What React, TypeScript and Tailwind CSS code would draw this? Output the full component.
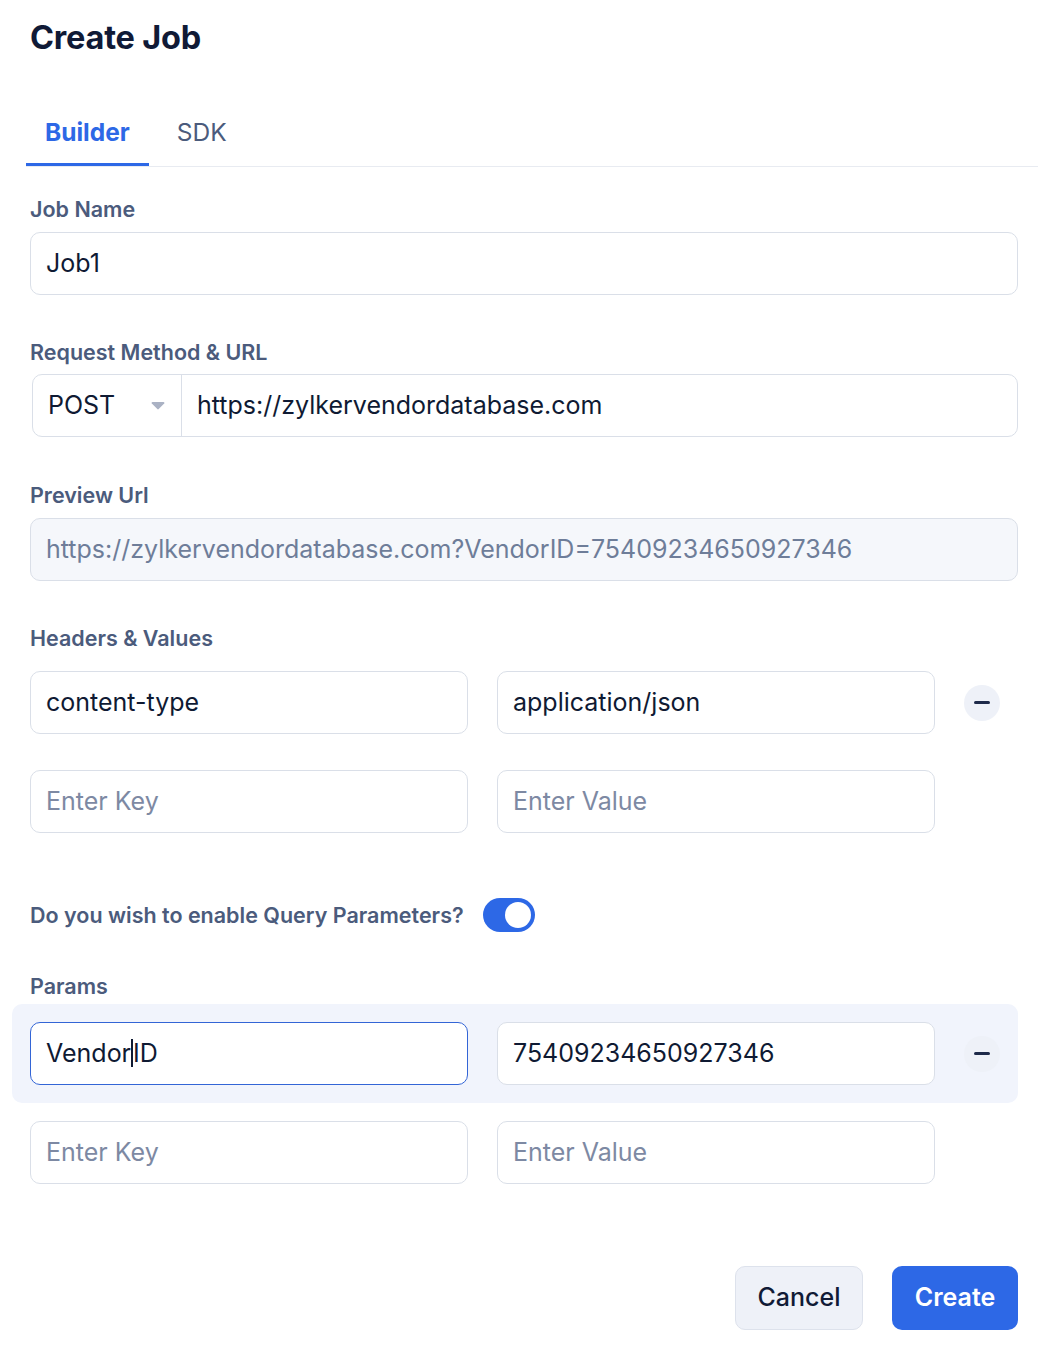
import { useState } from "react";

// Create Job form — builder tab
type Pair = { key: string; value: string };

const font = { fontFamily: "Inter, 'Noto Sans', sans-serif" };

function MinusButton() {
    return (
        <button className="flex h-9 w-9 shrink-0 items-center justify-center rounded-full bg-[#eef1f8]">
            <span className="block h-[3px] w-[16px] rounded-full bg-[#1e2a4a]" />
        </button>
    );
}

function Field({ value, placeholder, focused }: { value?: string; placeholder: string; focused?: boolean }) {
    return (
        <div
            className={
                "flex h-[63px] w-[438px] shrink-0 items-center rounded-[10px] border bg-white px-[15px] text-[25px] " +
                (focused ? "border-[#3365d6]" : "border-[#dadfe8]")
            }
        >
            {value ? (
                focused ? (
                    <span className="text-[#0f1a33]">
                        Vendor<span className="inline-block h-[28px] w-[2px] translate-y-[5px] bg-[#0f1a33] align-baseline" />ID
                    </span>
                ) : (
                    <span className="text-[#0f1a33]">{value}</span>
                )
            ) : (
                <span className="text-[#7d89a3]">{placeholder}</span>
            )}
        </div>
    );
}

function Label({ children }: { children: React.ReactNode }) {
    return <p className="text-[21.5px] font-semibold leading-6 text-[#4b5b7c]">{children}</p>;
}

export default function App() {
    const [enabled, setEnabled] = useState(true);
    const headers: Pair[] = [{ key: "content-type", value: "application/json" }];

    return (
        <div className="min-h-[1350px] bg-white pr-[20px] pl-[30px]" style={font}>
            <h1 className="pt-[18px] text-[32.5px] font-bold leading-10 tracking-[-0.2px] text-[#101a36]">Create Job</h1>

            {/* tabs */}
            <div className="-mr-[20px] mt-[58px] -ml-[4px] flex border-b border-[#e8ebf1]">
                <div className="border-b-[3px] border-[#2d68e6] px-[19px] pb-[15px] text-[24.5px] font-bold leading-8 text-[#2d68e6]">Builder</div>
                <div className="px-[28px] pb-[15px] text-[24.5px] leading-8 text-[#4b5b7c]">SDK</div>
            </div>

            {/* job name */}
            <div className="mt-[30px]">
                <Label>Job Name</Label>
                <div className="mt-[11px] flex h-[63px] items-center rounded-[10px] border border-[#dadfe8] px-[15px] text-[25px] text-[#0f1a33]">Job1</div>
            </div>

            {/* method + url */}
            <div className="mt-[45px]">
                <Label>Request Method &amp; URL</Label>
                <div className="mt-[10px] ml-[2px] flex h-[63px] rounded-[10px] border border-[#dadfe8]">
                    <div className="flex w-[149px] items-center justify-between border-r border-[#dadfe8] pr-[16px] pl-[15px] text-[25px] text-[#0f1a33]">
                        POST
                        <svg width="14" height="9" viewBox="0 0 14 9">
                            <path d="M1.5 1h11c.8 0 1.2.9.7 1.5l-5.5 5.6c-.4.4-1 .4-1.4 0L.8 2.5C.3 1.9.7 1 1.5 1z" fill="#aab2c4" />
                        </svg>
                    </div>
                    <div className="flex flex-1 items-center px-[15px] text-[25px] text-[#0f1a33]">https://zylkervendordatabase.com</div>
                </div>
            </div>

            {/* preview */}
            <div className="mt-[46px]">
                <Label>Preview Url</Label>
                <div className="mt-[11px] flex h-[63px] items-center rounded-[10px] border border-[#dadfe8] bg-[#f5f7fb] px-[15px] text-[25px] text-[#6e7d99]">
                    https://zylkervendordatabase.com?VendorID=75409234650927346
                </div>
            </div>

            {/* headers */}
            <div className="mt-[45px]">
                <Label>Headers &amp; Values</Label>
                <div className="mt-[21px] flex flex-col gap-[36px]">
                    {headers.map((h) => (
                        <div key={h.key} className="flex items-center gap-[29px]">
                            <Field value={h.key} placeholder="Enter Key" />
                            <Field value={h.value} placeholder="Enter Value" />
                            <MinusButton />
                        </div>
                    ))}
                    <div className="flex items-center gap-[29px]">
                        <Field placeholder="Enter Key" />
                        <Field placeholder="Enter Value" />
                    </div>
                </div>
            </div>

            {/* query toggle */}
            <div className="mt-[65px] flex items-center gap-[19px]">
                <Label>Do you wish to enable Query Parameters?</Label>
                <button
                    onClick={() => setEnabled(!enabled)}
                    className={"flex h-[34px] w-[52px] items-center rounded-full p-[4px] " + (enabled ? "justify-end bg-[#2d68e6]" : "justify-start bg-[#cfd5e1]")}
                >
                    <span className="h-[26px] w-[26px] rounded-full bg-white" />
                </button>
            </div>

            {/* params */}
            <div className="mt-[42px]">
                <Label>Params</Label>
                <div className="-ml-[18px] mt-[6px] flex items-center gap-[29px] rounded-[10px] bg-[#f1f4fc] py-[18px] pl-[18px]">
                    <Field value="VendorID" placeholder="Enter Key" focused />
                    <Field value="75409234650927346" placeholder="Enter Value" />
                    <MinusButton />
                </div>
                <div className="mt-[18px] flex items-center gap-[29px]">
                    <Field placeholder="Enter Key" />
                    <Field placeholder="Enter Value" />
                </div>
            </div>

            {/* footer */}
            <div className="mt-[82px] flex justify-end gap-[29px]">
                <button className="h-[64px] w-[128px] rounded-[10px] border border-[#dde2ec] bg-[#eef1f8] text-[25px] font-medium text-[#101a36]">Cancel</button>
                <button className="h-[64px] w-[126px] rounded-[10px] bg-[#2d68e6] text-[25px] font-semibold text-white">Create</button>
            </div>
        </div>
    );
}
